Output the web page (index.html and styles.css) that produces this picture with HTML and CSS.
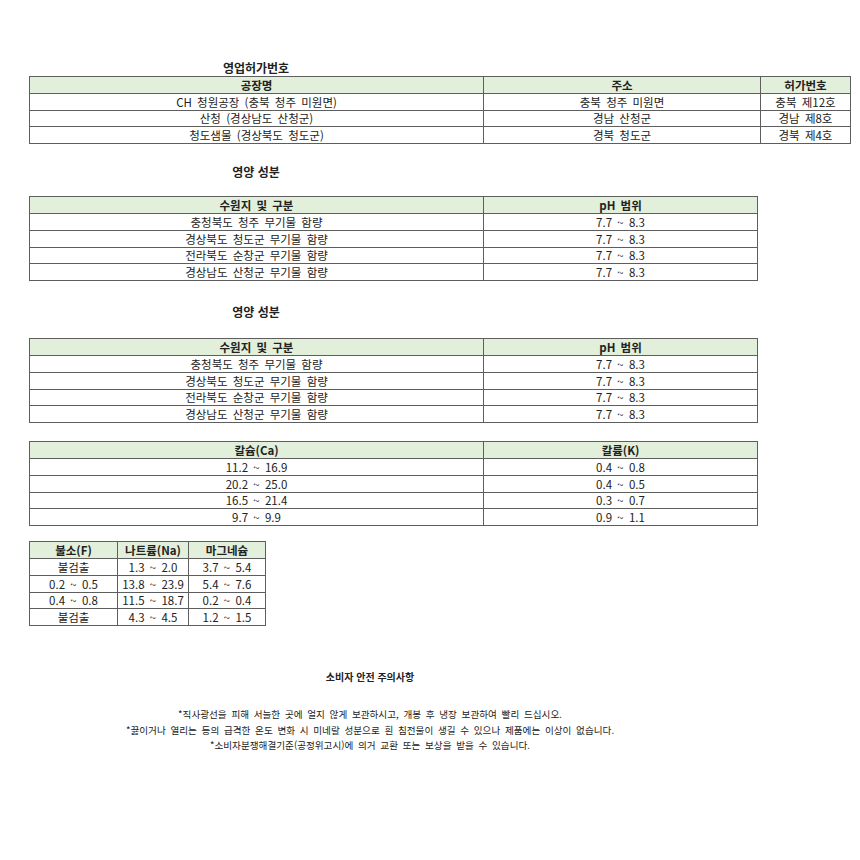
FILE: index.html
```html
<!DOCTYPE html>
<html lang="ko">
<head>
<meta charset="utf-8">
<link rel="stylesheet" href="styles.css">
</head>
<body>
<div class="page">
  <div class="title t1">영업허가번호</div>
  <table class="tbl w-full">
    <colgroup><col class="c1"><col class="c2"><col class="c3"></colgroup>
    <tr class="head"><th>공장명</th><th>주소</th><th>허가번호</th></tr>
    <tr><td>CH 청원공장 (충북 청주 미원면)</td><td>충북 청주 미원면</td><td>충북 제12호</td></tr>
    <tr><td>산청 (경상남도 산청군)</td><td>경남 산청군</td><td>경남 제8호</td></tr>
    <tr><td>청도샘물 (경상북도 청도군)</td><td>경북 청도군</td><td>경북 제4호</td></tr>
  </table>

  <div class="title t2">영양 성분</div>
  <table class="tbl w-mid">
    <colgroup><col class="c1"><col class="c2b"></colgroup>
    <tr class="head"><th>수원지 및 구분</th><th>pH 범위</th></tr>
    <tr><td>충청북도 청주 무기물 함량</td><td>7.7 ~ 8.3</td></tr>
    <tr><td>경상북도 청도군 무기물 함량</td><td>7.7 ~ 8.3</td></tr>
    <tr><td>전라북도 순창군 무기물 함량</td><td>7.7 ~ 8.3</td></tr>
    <tr><td>경상남도 산청군 무기물 함량</td><td>7.7 ~ 8.3</td></tr>
  </table>

  <div class="title t3">영양 성분</div>
  <table class="tbl w-mid">
    <colgroup><col class="c1"><col class="c2b"></colgroup>
    <tr class="head"><th>수원지 및 구분</th><th>pH 범위</th></tr>
    <tr><td>충청북도 청주 무기물 함량</td><td>7.7 ~ 8.3</td></tr>
    <tr><td>경상북도 청도군 무기물 함량</td><td>7.7 ~ 8.3</td></tr>
    <tr><td>전라북도 순창군 무기물 함량</td><td>7.7 ~ 8.3</td></tr>
    <tr><td>경상남도 산청군 무기물 함량</td><td>7.7 ~ 8.3</td></tr>
  </table>

  <table class="tbl w-mid t4">
    <colgroup><col class="c1"><col class="c2b"></colgroup>
    <tr class="head"><th>칼슘(Ca)</th><th>칼륨(K)</th></tr>
    <tr><td>11.2 ~ 16.9</td><td>0.4 ~ 0.8</td></tr>
    <tr><td>20.2 ~ 25.0</td><td>0.4 ~ 0.5</td></tr>
    <tr><td>16.5 ~ 21.4</td><td>0.3 ~ 0.7</td></tr>
    <tr><td>9.7 ~ 9.9</td><td>0.9 ~ 1.1</td></tr>
  </table>

  <table class="tbl w-small t5">
    <colgroup><col class="s1"><col class="s2"><col class="s3"></colgroup>
    <tr class="head"><th>불소(F)</th><th>나트륨(Na)</th><th>마그네슘</th></tr>
    <tr><td>불검출</td><td>1.3 ~ 2.0</td><td>3.7 ~ 5.4</td></tr>
    <tr><td>0.2 ~ 0.5</td><td>13.8 ~ 23.9</td><td>5.4 ~ 7.6</td></tr>
    <tr><td>0.4 ~ 0.8</td><td>11.5 ~ 18.7</td><td>0.2 ~ 0.4</td></tr>
    <tr><td>불검출</td><td>4.3 ~ 4.5</td><td>1.2 ~ 1.5</td></tr>
  </table>

  <div class="notice">
    <div class="notice-title">소비자 안전 주의사항</div>
    <p class="notice-body">*직사광선을 피해 서늘한 곳에 얼지 않게 보관하시고, 개봉 후 냉장 보관하여 빨리 드십시오.<br>*끓이거나 열리는 등의 급격한 온도 변화 시 미네랄 성분으로 흰 침전물이 생길 수 있으나 제품에는 이상이 없습니다.<br>*소비자분쟁해결기준(공정위고시)에 의거 교환 또는 보상을 받을 수 있습니다.</p>
  </div>
</div>
</body>
</html>
```

FILE: styles.css
```css
html, body {
  margin: 0;
  padding: 0;
  background: #ffffff;
}
body {
  font-family: "Noto Sans CJK KR", "Noto Sans", sans-serif;
  color: #222222;
  font-size: 11px;
}
.page {
  padding: 60px 0 0 29px;
}
.title {
  width: 454px;
  text-align: center;
  font-weight: bold;
  font-size: 12px;
  line-height: 16px;
}
.t2 { margin-top: 20px; margin-bottom: 16px; }
.t3 { margin-top: 23px; margin-bottom: 18px; }
.tbl {
  border-collapse: collapse;
  table-layout: fixed;
  border: 1px solid #4d4d4d;
}
.tbl tr {
  height: 16.8px;
}
.tbl th, .tbl td {
  border: 1px solid #5e5e5e;
  padding: 0;
  line-height: 14px;
  text-align: center;
  font-size: 11.5px;
  word-spacing: 2px;
  white-space: nowrap;
  overflow: hidden;
}
.tbl th {
  background: #e2efda;
  font-weight: bold;
}
.w-full { width: 821px; }
.w-mid { width: 728px; }
.w-small { width: 236px; }
.c1 { width: 454px; }
.c2 { width: 277px; }
.c3 { width: 90px; }
.c2b { width: 274px; }
.s1 { width: 88px; }
.s2 { width: 71px; }
.s3 { width: 77px; }
.t4 { margin-top: 18px; }
.t5 { margin-top: 15px; }
.notice {
  width: 682px;
  text-align: center;
  margin-top: 43px;
}
.notice-title {
  font-weight: bold;
  font-size: 10px;
  line-height: 16px;
}
.notice-body {
  margin: 22px 0 0 0;
  font-size: 9.6px;
  line-height: 15.5px;
  word-spacing: 2px;
}
```
